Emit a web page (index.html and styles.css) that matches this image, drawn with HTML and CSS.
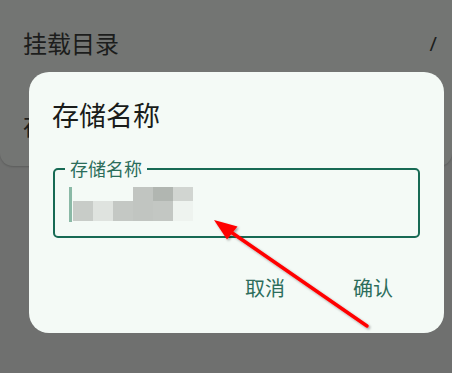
FILE: index.html
```html
<!DOCTYPE html>
<html lang="zh">
<head>
<meta charset="utf-8">
<link rel="stylesheet" href="styles.css">
</head>
<body>
<div class="screen">
  <div class="card">
    <div class="row"><span class="row-title">挂载目录</span><span class="row-value">/</span></div>
    <div class="row"><span class="row-title">存储名称</span><span class="row-value"></span></div>
  </div>

  <div class="dialog">
    <div class="dialog-title">存储名称</div>
    <div class="field">
      <span class="field-label">存储名称</span>
      <div class="caret"></div>
      <div class="mosaic">
        <i class="m0"></i><i class="m0"></i><i class="m0"></i><i class="m4"></i><i class="m5"></i><i class="m6"></i>
        <i class="m1"></i><i class="m2"></i><i class="m3"></i><i class="m4"></i><i class="m4b"></i><i class="m7"></i>
      </div>
    </div>
    <div class="actions">
      <span class="btn">取消</span>
      <span class="btn">确认</span>
    </div>
  </div>

  <svg class="arrow" width="452" height="373" viewBox="0 0 452 373">
    <defs>
      <filter id="sh" x="-20%" y="-20%" width="140%" height="140%">
        <feDropShadow dx="1.5" dy="1.5" stdDeviation="1.2" flood-color="#000" flood-opacity="0.35"/>
      </filter>
    </defs>
    <g filter="url(#sh)">
      <line x1="367" y1="326" x2="228" y2="230" stroke="#ff0000" stroke-width="3.5" stroke-linecap="round"/>
      <polygon points="214,220 237.5,226.5 227,239.5" fill="#ff0000"/>
    </g>
  </svg>
</div>
</body>
</html>
```

FILE: styles.css
```css
* { box-sizing: border-box; }
html, body {
  margin: 0;
  padding: 0;
}
body {
  width: 452px;
  height: 373px;
  overflow: hidden;
  background: #6f706f;
  font-family: "Noto Sans CJK SC", "Noto Sans", sans-serif;
}
.screen {
  position: relative;
  width: 452px;
  height: 373px;
}
.card {
  height: 166px;
  padding-top: 2px;
  background: #737573;
  border-radius: 0 0 13px 13px;
  box-shadow: 0 1px 2px rgba(0, 0, 0, 0.18);
}
.row {
  height: 82px;
  display: flex;
  align-items: center;
  justify-content: space-between;
  padding: 0 15px 0 23px;
}
.row-title {
  font-size: 24px;
  color: #1c1d1c;
  line-height: 30px;
}
.row-value {
  font-size: 20px;
  color: #1c1d1c;
  font-family: "Noto Sans", sans-serif;
}
.dialog {
  position: absolute;
  left: 29px;
  top: 72px;
  width: 415px;
  height: 261px;
  background: #f4faf6;
  border-radius: 20px;
  padding: 26px 24px 25px 24px;
  display: flex;
  flex-direction: column;
}
.dialog-title {
  font-size: 27px;
  line-height: 34px;
  color: #191c1a;
  margin-left: -1px;
}
.field {
  position: relative;
  margin-top: 36px;
  height: 70px;
  border: 2px solid #176a54;
  border-radius: 5px;
  padding: 17px 0 0 14px;
  display: flex;
  align-items: flex-start;
}
.field-label {
  position: absolute;
  left: 10px;
  top: -15px;
  padding: 0 5px;
  background: #f4faf6;
  font-size: 18px;
  line-height: 26px;
  color: #2b6d5a;
}
.caret {
  width: 3px;
  height: 35px;
  background: #8ab9a6;
}
.mosaic {
  margin-left: 1px;
  display: grid;
  grid-template-columns: repeat(6, 20px);
  grid-template-rows: 14px 20px;
}
.mosaic i { display: block; }
.m0 { background: transparent; }
.m1 { background: #c8ccc8; }
.m2 { background: #dfe3df; }
.m3 { background: #c4c8c4; }
.m4 { background: #c1c5c1; }
.m4b { background: #c3c7c3; }
.m5 { background: #b1b6b1; }
.m6 { background: #d1d5d1; }
.m7 { background: #eef3ef; }
.actions {
  margin-top: 30px;
  display: flex;
  justify-content: flex-end;
  gap: 44px;
  padding-right: 15px;
}
.btn {
  font-size: 20px;
  line-height: 40px;
  padding: 0 12px;
  color: #2c6d5b;
}
.arrow {
  position: absolute;
  left: 0;
  top: 0;
  pointer-events: none;
}
```
